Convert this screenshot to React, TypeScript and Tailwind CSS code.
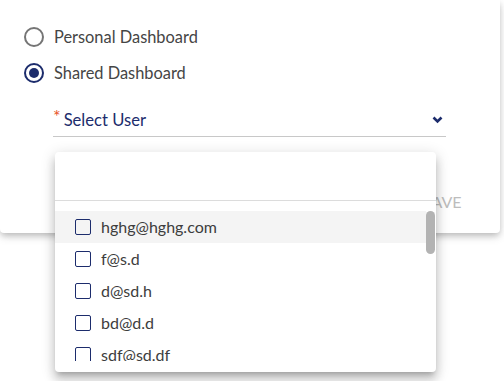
import React from "react";

const users = ["hghg@hghg.com", "f@s.d", "d@sd.h", "bd@d.d", "sdf@sd.df", "aa@bb.cc"];

function Radio({ checked, label }: { checked?: boolean; label: string }) {
  return (
    <div className="flex items-center h-[36px]">
      <div
        className={`w-[20px] h-[20px] rounded-full border-2 flex items-center justify-center ${
          checked ? "border-[#1c2c6c]" : "border-[#757575]"
        }`}
      >
        {checked && <div className="w-[10px] h-[10px] rounded-full bg-[#1c2c6c]" />}
      </div>
      <span className="ml-[10px] text-[16.4px] text-[#454545]">{label}</span>
    </div>
  );
}

export default function App() {
  return (
    <div
      className="relative w-[504px] h-[381px] bg-white overflow-hidden"
      style={{ fontFamily: "Lato, 'Noto Sans', sans-serif" }}
    >
      <div className="w-[500px] h-[233px] bg-white rounded-b-[4px] shadow-[0px_3px_6px_-1px_rgba(0,0,0,0.2),0px_4px_10px_0px_rgba(0,0,0,0.12)] relative">
        <div className="pt-[19px] pl-[24px]">
          <Radio label="Personal Dashboard" />
          <Radio checked label="Shared Dashboard" />
        </div>
        <div className="ml-[53px] w-[393px] mt-[15px] border-b border-[#c8c8c8] h-[31px] flex items-start relative">
          <span className="text-[#e8542a] text-[18px] leading-none mt-[1px] ml-[0px]">*</span>
          <span className="ml-[3px] text-[16.6px] text-[#1c2c6c] leading-[20px] mt-[4px]">Select User</span>
          <svg
            className="absolute right-[3px] top-[10px]"
            width="11"
            height="8"
            viewBox="0 0 11 8"
          >
            <path d="M1.5 1.5 L5.5 5.5 L9.5 1.5" stroke="#1c2c6c" strokeWidth="2.6" fill="none" />
          </svg>
        </div>
        <div className="absolute left-[423px] top-[190px] text-[16px] text-[#bdbdbd]">SAVE</div>
      </div>

      <div className="absolute left-[55px] top-[152px] w-[381px] h-[220px] bg-white rounded-[4px] shadow-[0px_5px_5px_-3px_rgba(0,0,0,0.2),0px_8px_10px_1px_rgba(0,0,0,0.14),0px_3px_14px_2px_rgba(0,0,0,0.12)]">
        <div className="h-[49px] border-b border-[#dcdcdc]" />
        <div className="relative mt-[10px] h-[150px] overflow-hidden">
          <div className="w-[371px]">
            {users.map((u, i) => (
              <div
                key={u}
                className={`h-[32px] flex items-center pl-[20px] ${i === 0 ? "bg-[#f4f4f4]" : ""}`}
              >
                <div className="w-[16px] h-[16px] border-[1.5px] border-[#1c2c6c] rounded-[2px]" />
                <span className="ml-[10px] text-[16px] text-[#3d3d3d]">{u}</span>
              </div>
            ))}
          </div>
          <div className="absolute left-[371px] top-0 w-[9px] h-[43px] rounded-full bg-[#b3b3b3]" />
        </div>
      </div>
    </div>
  );
}
